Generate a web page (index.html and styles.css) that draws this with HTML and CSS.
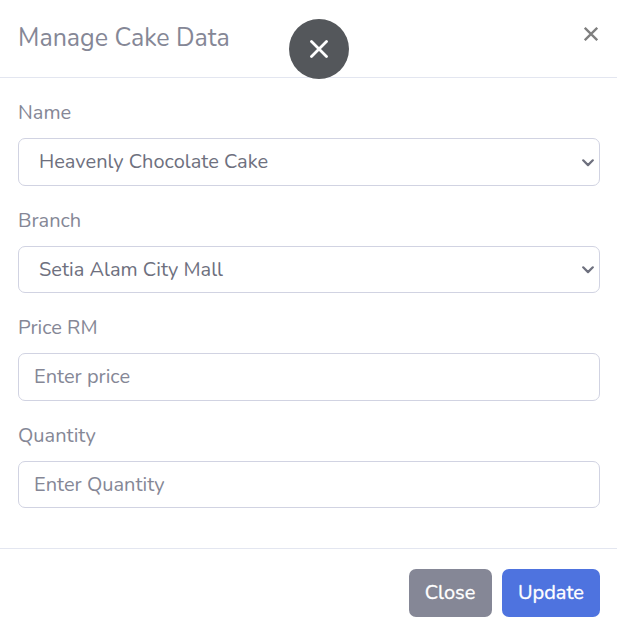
FILE: index.html
```html
<!DOCTYPE html>
<html lang="en">
<head>
<meta charset="utf-8">
<title>Manage Cake Data</title>
<link rel="stylesheet" href="styles.css">
</head>
<body>
<div class="modal">
  <header class="modal-header">
    <h5 class="modal-title">Manage Cake Data</h5>
    <button class="dismiss" type="button" aria-label="Close">
      <svg width="14" height="14" viewBox="0 0 14 14"><path d="M.8.8 13.2 13.2M13.2.8.8 13.2"/></svg>
    </button>
    <button class="overlay-close" type="button" aria-label="Close overlay">
      <svg width="18" height="18" viewBox="0 0 18 18"><path d="M1.5 1.5 16.5 16.5M16.5 1.5 1.5 16.5"/></svg>
    </button>
  </header>
  <form class="modal-body">
    <div class="group">
      <label for="name">Name</label>
      <div class="select-wrap">
        <select class="control" id="name"><option>Heavenly Chocolate Cake</option></select>
        <svg class="chevron chevron-name" width="12" height="8" viewBox="0 0 12 8"><path d="M1.2 1.3 6 6.1 10.8 1.3"/></svg>
      </div>
    </div>
    <div class="group">
      <label for="branch">Branch</label>
      <div class="select-wrap">
        <select class="control control-branch" id="branch"><option>Setia Alam City Mall</option></select>
        <svg class="chevron" width="12" height="8" viewBox="0 0 12 8"><path d="M1.2 1.3 6 6.1 10.8 1.3"/></svg>
      </div>
    </div>
    <div class="group">
      <label for="price">Price RM</label>
      <input class="control" id="price" type="text" placeholder="Enter price">
    </div>
    <div class="group">
      <label for="quantity">Quantity</label>
      <input class="control" id="quantity" type="text" placeholder="Enter Quantity">
    </div>
  </form>
  <footer class="modal-footer">
    <button class="btn btn-secondary" type="button">Close</button>
    <button class="btn btn-primary" type="button">Update</button>
  </footer>
</div>
</body>
</html>
```
FILE: styles.css
```css
* { box-sizing: border-box; }
body {
  margin: 0;
  background: #fff;
  color: #858796;
  font: 400 20px/30px Nunito, Lato, "Open Sans", sans-serif;
  overflow: hidden;
}
button, input, select { font: inherit; }
.modal-header {
  position: relative;
  display: flex;
  justify-content: space-between;
  height: 78px;
  padding: 18px 18px 0;
  border-bottom: 1px solid #e3e6f0;
}
.modal-title {
  margin: 0;
  font-size: 25px;
  line-height: 40px;
  font-weight: 400;
}
.dismiss {
  display: flex;
  width: 14px;
  height: 14px;
  margin: 9px 1px 0 0;
  padding: 0;
  border: 0;
  background: none;
}
svg { display: block; fill: none; stroke-linecap: round; stroke-linejoin: round; }
.dismiss svg { stroke: #7f7f7f; stroke-width: 2.3; stroke-linecap: butt; }
.overlay-close {
  position: absolute;
  top: 19px;
  left: 289px;
  display: grid;
  place-items: center;
  width: 60px;
  height: 60px;
  padding: 0;
  border: 0;
  border-radius: 50%;
  background: #54575b;
}
.overlay-close svg { stroke: #fff; stroke-width: 2.8; }
.modal-body { padding: 20px 17px 20px 18px; }
.group { margin-bottom: 20px; }
label { display: block; height: 30px; margin-bottom: 10px; }
.select-wrap { position: relative; }
.control {
  display: block;
  width: 100%;
  height: 47.5px;
  padding: 0 15px;
  border: 1px solid #d1d3e2;
  border-radius: 7px;
  background: #fff;
  color: #6e707e;
  outline: 0;
  appearance: none;
}
select.control { padding-left: 20px; }
.control-branch { padding-top: 1px; }
.control::placeholder { color: #858796; opacity: 1; }
.chevron {
  position: absolute;
  top: 20px;
  right: 6px;
  stroke: #6e707e;
  stroke-width: 2.2;
}
.chevron-name { top: 21px; }
.modal-footer {
  display: flex;
  justify-content: flex-end;
  gap: 10px;
  padding: 20px 17px 15px;
  border-top: 1px solid #e3e6f0;
}
.btn {
  height: 48px;
  padding: 0;
  border: 0;
  border-radius: 7px;
  color: #fff;
  -webkit-text-stroke: 0.3px #fff;
}
.btn-secondary { width: 83px; padding-right: 1px; background: #858796; }
.btn-primary { width: 98px; background: #4e73df; }
```
